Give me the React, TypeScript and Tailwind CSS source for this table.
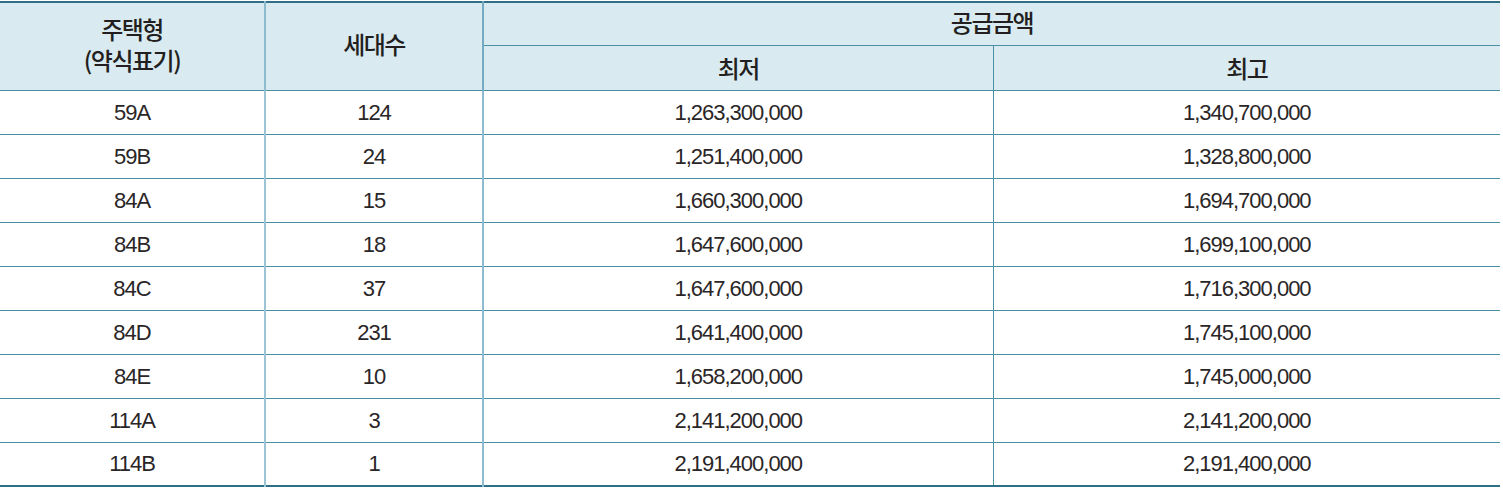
const rows = [
  ["59A", "124", "1,263,300,000", "1,340,700,000"],
  ["59B", "24", "1,251,400,000", "1,328,800,000"],
  ["84A", "15", "1,660,300,000", "1,694,700,000"],
  ["84B", "18", "1,647,600,000", "1,699,100,000"],
  ["84C", "37", "1,647,600,000", "1,716,300,000"],
  ["84D", "231", "1,641,400,000", "1,745,100,000"],
  ["84E", "10", "1,658,200,000", "1,745,000,000"],
  ["114A", "3", "2,141,200,000", "2,141,200,000"],
  ["114B", "1", "2,191,400,000", "2,191,400,000"],
];

export default function App() {
  return (
    <div className="bg-white w-[1503px] h-[488px] pt-px font-['Liberation_Sans','Noto_Sans_CJK_KR',sans-serif] text-[#231f20]">
      <table className="w-[1500px] border-collapse table-fixed border-t-2 border-b-2 border-[#2f6f85]">
        <colgroup>
          <col className="w-[265px]" />
          <col className="w-[218px]" />
          <col className="w-[510px]" />
          <col className="w-[507px]" />
        </colgroup>
        <thead className="bg-[#d9eaf1] text-[24px] font-['Noto_Sans_CJK_KR',sans-serif] tracking-[-1.5px]">
          <tr className="h-[43px]">
            <th rowSpan={2} className="font-medium leading-[31px] pb-1 border-r-2 border-[#8dbbcf] border-b border-b-[#4b8fa4]">
              <div>주택형</div>
              <div>(약식표기)</div>
            </th>
            <th rowSpan={2} className="font-medium leading-[28px] pb-1 border-r-2 border-[#74abc2] border-b border-b-[#4b8fa4]">세대수</th>
            <th colSpan={2} className="font-medium leading-[28px] pb-1 border-b border-[#4b8fa4]">공급금액</th>
          </tr>
          <tr className="h-[45px]">
            <th className="font-medium leading-[28px] border-r border-[#4b8fa4] border-b border-b-[#4b8fa4]">최저</th>
            <th className="font-medium leading-[28px] border-b border-[#4b8fa4]">최고</th>
          </tr>
        </thead>
        <tbody className="text-[22px] tracking-[-1px] text-[#2a2627]">
          {rows.map((r, i) => (
            <tr key={r[0]} className={`h-[44px] ${i < rows.length - 1 ? "border-b border-[#4b8fa4]" : ""}`}>
              <td className="text-center border-r-2 border-[#9cc4d5]">{r[0]}</td>
              <td className="text-center border-r-2 border-[#8dbbcf]">{r[1]}</td>
              <td className="text-center border-r border-[#4b8fa4]">{r[2]}</td>
              <td className="text-center">{r[3]}</td>
            </tr>
          ))}
        </tbody>
      </table>
    </div>
  );
}
